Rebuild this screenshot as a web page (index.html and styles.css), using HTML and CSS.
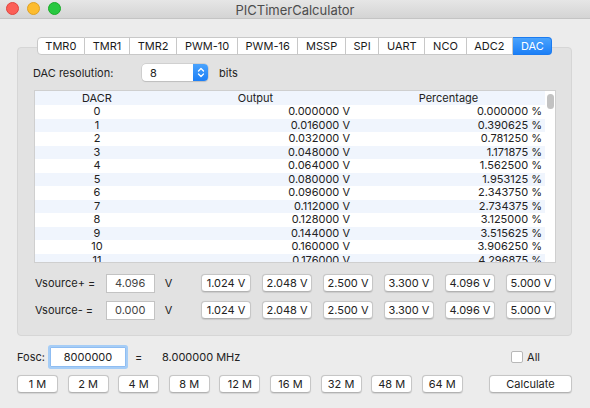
FILE: index.html
```html
<!DOCTYPE html>
<html lang="en">
<head>
    <meta charset="UTF-8">
    <title>PICTimerCalculator</title>
    <link rel="stylesheet" href="styles.css">
</head>
<body>
    <div class="window">
        <div class="titlebar">
            <div class="lights">
                <span class="light red"></span>
                <span class="light yellow"></span>
                <span class="light green"></span>
            </div>
            <div class="window-title">PICTimerCalculator</div>
        </div>

        <div class="content">
            <!-- Tab bar -->
            <div class="tabs">
                <div class="tab">TMR0</div>
                <div class="tab">TMR1</div>
                <div class="tab">TMR2</div>
                <div class="tab">PWM-10</div>
                <div class="tab">PWM-16</div>
                <div class="tab">MSSP</div>
                <div class="tab">SPI</div>
                <div class="tab">UART</div>
                <div class="tab">NCO</div>
                <div class="tab">ADC2</div>
                <div class="tab active">DAC</div>
            </div>

            <div class="panel">
                <div class="res-row">
                    <span class="res-label">DAC resolution:</span>
                    <div class="select">
                        <span class="select-value">8</span>
                        <span class="stepper">
                            <svg width="8" height="11" viewBox="0 0 8 11">
                                <path d="M1.5 4 L4 1.5 L6.5 4 M1.5 7 L4 9.5 L6.5 7" fill="none" stroke="#fff" stroke-width="1.3" stroke-linecap="round" stroke-linejoin="round"/>
                            </svg>
                        </span>
                    </div>
                    <span class="bits">bits</span>
                </div>

                <!-- Table for DACR values -->
                <div class="table-box">
                    <table>
                        <thead>
                            <tr>
                                <th class="col-dacr">DACR</th>
                                <th class="col-out">Output</th>
                                <th class="col-pct">Percentage</th>
                            </tr>
                        </thead>
                        <tbody id="dac-table"></tbody>
                    </table>
                    <div class="scroll-knob"></div>
                </div>

                <div class="vs-row">
                    <span class="vs-label">Vsource+ =</span>
                    <div class="field">4.096</div>
                    <span class="unit">V</span>
                    <div class="btn-group">
                        <div class="btn">1.024 V</div>
                        <div class="btn">2.048 V</div>
                        <div class="btn">2.500 V</div>
                        <div class="btn">3.300 V</div>
                        <div class="btn">4.096 V</div>
                        <div class="btn">5.000 V</div>
                    </div>
                </div>
                <div class="vs-row second">
                    <span class="vs-label">Vsource- =</span>
                    <div class="field">0.000</div>
                    <span class="unit">V</span>
                    <div class="btn-group">
                        <div class="btn">1.024 V</div>
                        <div class="btn">2.048 V</div>
                        <div class="btn">2.500 V</div>
                        <div class="btn">3.300 V</div>
                        <div class="btn">4.096 V</div>
                        <div class="btn">5.000 V</div>
                    </div>
                </div>
            </div>

            <!-- Oscillator section -->
            <div class="osc-row">
                <span class="osc-label">Fosc:</span>
                <div class="field focus">8000000</div>
                <span class="equals">=</span>
                <span class="mhz">8.000000 MHz</span>
                <label class="check">
                    <span class="check-box"></span>
                    <span>All</span>
                </label>
            </div>
            <div class="freq-row">
                <div class="freq-group">
                    <div class="btn freq">1 M</div>
                    <div class="btn freq">2 M</div>
                    <div class="btn freq">4 M</div>
                    <div class="btn freq">8 M</div>
                    <div class="btn freq">12 M</div>
                    <div class="btn freq">16 M</div>
                    <div class="btn freq">32 M</div>
                    <div class="btn freq">48 M</div>
                    <div class="btn freq">64 M</div>
                </div>
                <div class="btn calc">Calculate</div>
            </div>
        </div>
    </div>

    <script>
        // Fill the DAC table: 8 bit, Vref 4.096 V
        function fillTable() {
            const body = document.getElementById('dac-table');
            for (let i = 0; i < 12; i++) {
                const row = document.createElement('tr');
                const out = (i * 4.096 / 256).toFixed(6) + ' V';
                const pct = (i * 100 / 256).toFixed(6) + ' %';
                row.innerHTML = `<td class="col-dacr">${i}</td><td class="col-out">${out}</td><td class="col-pct">${pct}</td>`;
                body.appendChild(row);
            }
        }

        fillTable();
    </script>
</body>
</html>
```

FILE: styles.css
```css
body {
    margin: 0;
    background: #ececec;
    font-family: 'Inter', 'Liberation Sans', sans-serif;
    font-size: 11px;
    color: #222;
}

.window {
    width: 590px;
    height: 408px;
    overflow: hidden;
}

.titlebar {
    height: 18px;
    background: linear-gradient(#e6e6e6, #d4d4d4);
    border-bottom: 1px solid #c4c4c4;
    display: flex;
    align-items: center;
    position: relative;
}

.lights {
    display: flex;
    gap: 8px;
    padding-left: 6px;
    margin-top: -1px;
}

.light {
    width: 11px;
    height: 11px;
    border-radius: 50%;
    display: block;
}

.red { background: #fc5f57; border: 0.5px solid #e0443e; }
.yellow { background: #fdbc2e; border: 0.5px solid #dea123; }
.green { background: #28c840; border: 0.5px solid #1aab29; }

.window-title {
    position: absolute;
    left: 0;
    right: 0;
    top: 2px;
    text-align: center;
    font-size: 13px;
    color: #4c4c4c;
}

.content {
    padding: 0 18px 0 17px;
}

.tabs {
    display: flex;
    justify-content: center;
    margin-top: 18px;
    position: relative;
    z-index: 1;
}

.tab {
    flex: none;
    white-space: nowrap;
    height: 16px;
    line-height: 16px;
    background: #fff;
    border: 1px solid #c8c8c8;
    border-left: none;
    padding: 0 7.7px;
    font-size: 11px;
    color: #1a1a1a;
}

.tab:first-child {
    border-left: 1px solid #c8c8c8;
    border-radius: 4px 0 0 4px;
}

.tab.active {
    background: linear-gradient(#4aa3fd, #1c7ff6);
    border-color: #1b7bf0;
    color: #fff;
    border-radius: 0 4px 4px 0;
}

.panel {
    box-sizing: border-box;
    margin-top: -8px;
    background: #e2e2e2;
    border: 1px solid #d6d6d6;
    border-radius: 4px;
    height: 289px;
    padding: 16px 15px 0 15px;
}

.res-row {
    display: flex;
    align-items: center;
    height: 17px;
}

.res-label {
    width: 109px;
}

.select {
    width: 66px;
    height: 17px;
    background: #fff;
    border-radius: 4px;
    box-shadow: 0 0 0 0.5px #bdbdbd, 0 1px 1px rgba(0, 0, 0, 0.15);
    display: flex;
    align-items: center;
    justify-content: space-between;
    overflow: hidden;
}

.select-value {
    padding-left: 8px;
}

.stepper {
    width: 15px;
    height: 17px;
    background: linear-gradient(#4aa3fd, #1c7ff6);
    display: flex;
    align-items: center;
    justify-content: center;
}

.bits {
    margin-left: 11px;
}

.table-box {
    margin-top: 9px;
    margin-left: 1px;
    height: 171px;
    background: #fff;
    border: 1px solid #cfcfcf;
    position: relative;
    overflow: hidden;
}

table {
    width: 510px;
    border-collapse: collapse;
    table-layout: fixed;
}

th, td {
    padding: 0;
    font-weight: normal;
    white-space: nowrap;
}

th {
    height: 14px;
    line-height: 14px;
}

td {
    height: 13.5px;
    line-height: 13.5px;
}

thead tr {
    background: #f0f5fd;
}

tbody tr:nth-child(even) {
    background: #f0f5fd;
}

.col-dacr {
    width: 124px;
    text-align: center;
}

.col-out {
    width: 193px;
    text-align: right;
    padding-right: 2px;
}

.col-pct {
    text-align: right;
    padding-right: 3px;
}

thead .col-out, thead .col-pct {
    text-align: center;
    padding-right: 0;
}

.scroll-knob {
    position: absolute;
    right: 1px;
    top: 3px;
    width: 7px;
    height: 15px;
    border-radius: 4px;
    background: #c2c2c2;
}

.vs-row {
    display: flex;
    align-items: center;
    height: 18px;
    margin-top: 11px;
    padding-left: 2px;
}

.vs-row.second {
    margin-top: 9px;
}

.vs-label {
    width: 72px;
}

.field {
    width: 48px;
    height: 17px;
    line-height: 17px;
    background: #fff;
    border: 1px solid #c3c3c3;
    text-align: center;
    color: #444;
}

.unit {
    margin-left: 10px;
    width: 37px;
}

.btn-group {
    display: flex;
    gap: 11px;
}

.btn {
    width: 48px;
    height: 16px;
    line-height: 16px;
    background: #fff;
    border: 1px solid #c6c6c6;
    border-bottom-color: #b2b2b2;
    border-radius: 4px;
    text-align: center;
    box-shadow: 0 0.5px 1px rgba(0, 0, 0, 0.1);
}

.osc-row {
    display: flex;
    align-items: center;
    height: 20px;
    margin-top: 11px;
}

.osc-label {
    width: 33px;
}

.field.focus {
    width: 74px;
    height: 18px;
    line-height: 18px;
    border: 1px solid #8fbdf2;
    box-shadow: 0 0 0 2px #a6cdf6;
    border-radius: 1px;
    color: #222;
}

.equals {
    margin-left: 9px;
    width: 27px;
}

.check {
    display: flex;
    align-items: center;
    gap: 4px;
    margin-left: auto;
    margin-right: 32px;
}

.check-box {
    width: 10px;
    height: 10px;
    background: #fff;
    border: 1px solid #b8b8b8;
    border-radius: 2px;
}

.freq-row {
    display: flex;
    align-items: center;
    justify-content: space-between;
    margin-top: 8px;
}

.freq-group {
    display: flex;
    gap: 9.6px;
}

.btn.freq {
    width: 39px;
}

.btn.calc {
    width: 81px;
}
```
